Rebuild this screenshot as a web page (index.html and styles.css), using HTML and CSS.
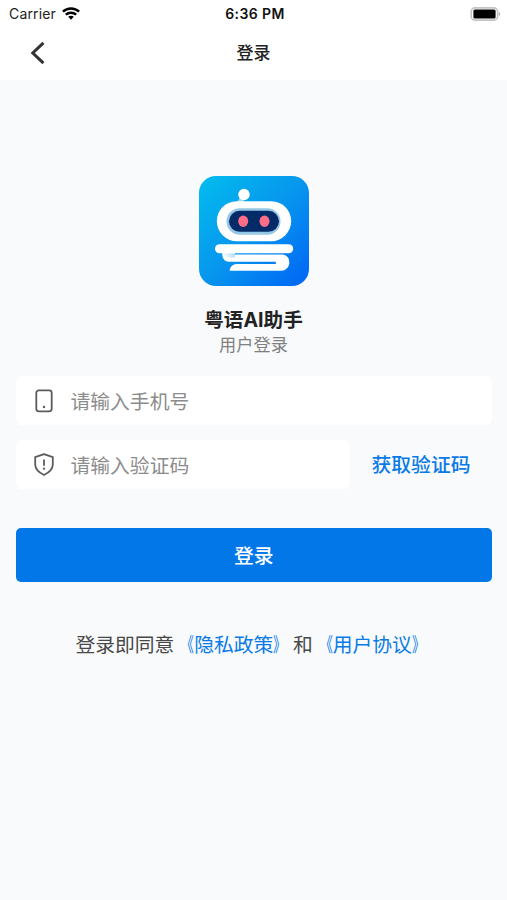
FILE: index.html
```html
<!DOCTYPE html>
<html lang="zh-CN">
<head>
  <meta charset="UTF-8" />
  <meta name="viewport" content="width=device-width, initial-scale=1.0"/>
  <title>登录</title>
  <link rel="stylesheet" href="styles.css">
</head>
<body>

<header>
  <!-- Status bar -->
  <div class="status">
    <div class="carrier">
      <span>Carrier</span>
      <svg width="18" height="14" viewBox="0 0 18 14" fill="none" stroke="#000" stroke-width="2.4">
        <path d="M0.9 4.7 C5.4 0.4 12.6 0.4 17.1 4.7"/>
        <path d="M3.8 7.7 C6.8 5 11.2 5 14.2 7.7"/>
        <path d="M6.2 9.8 C7.8 8.5 10.2 8.5 11.8 9.8 L9 12.7 Z" fill="#000" stroke="none"/>
      </svg>
    </div>
    <div class="time">6:36 PM</div>
    <div class="battery">
      <svg width="31" height="14" viewBox="0 0 31 14">
        <rect x="1.2" y="0.9" width="26.4" height="12.2" rx="3.6" fill="#fff" stroke="#c4c4c4" stroke-width="1.6"/>
        <rect x="3.4" y="2.6" width="22.2" height="8.8" rx="1.5" fill="#000"/>
        <path d="M28.8 4.9 C30.7 5.6 30.7 8.4 28.8 9.1 Z" fill="#aaa"/>
      </svg>
    </div>
  </div>

  <!-- Title bar -->
  <div class="navbar">
    <a class="back" href="#">
      <svg width="16" height="24" viewBox="0 0 16 24" fill="none" stroke="#333" stroke-width="3">
        <path d="M13.4 1.8 L2.8 12 L13.4 22.2"/>
      </svg>
    </a>
    <h1>登录</h1>
  </div>
</header>

<main>
  <div class="brand">
    <svg class="logo" width="110" height="110" viewBox="0 0 110 110">
      <defs>
        <linearGradient id="bg" x1="0" y1="0" x2="1" y2="1">
          <stop offset="0" stop-color="#02bdee"/>
          <stop offset="0.5" stop-color="#0796ee"/>
          <stop offset="1" stop-color="#0064f5"/>
        </linearGradient>
        <linearGradient id="fold" x1="0" y1="0" x2="1" y2="0">
          <stop offset="0" stop-color="#fff"/>
          <stop offset="1" stop-color="#b5dcfb"/>
        </linearGradient>
      </defs>
      <rect width="110" height="110" rx="17" fill="url(#bg)"/>
      <!-- antenna -->
      <path d="M36 26.500 C40 25 41 23 40.500 18 L47.500 23 C45.500 23.500 44 24.500 44 26.500 Z" fill="#9cdcf8"/>
      <circle cx="45" cy="18.5" r="5.7" fill="#fff"/>
      <!-- head -->
      <rect x="17.8" y="25.2" width="74.4" height="40" rx="20" fill="#fff"/>
      <rect x="27.5" y="32.2" width="54" height="26.5" rx="13.2" fill="#94c8e6"/>
      <rect x="30" y="34.8" width="50" height="21" rx="10.5" fill="#042b68"/>
      <ellipse cx="44.2" cy="45.3" rx="5" ry="5.7" fill="#fc6d86"/>
      <ellipse cx="65.5" cy="45.3" rx="5" ry="5.7" fill="#fc6d86"/>
      <!-- body -->
      <path d="M23.5 76 V80 C24 84 27 85.8 31 85.8 H76.8 V88 H38 C33.500 88 31 91 30.500 94.800 H82 C87 94.800 90.300 91 90.300 86.500 C90.300 81 87 78.600 82 78.600 H36 V76 Z" fill="#fff"/>
      <path d="M23.500 77 H36 V81.500 C31 81.500 27 81 23.500 79 Z" fill="url(#fold)"/>
      <rect x="16" y="68.2" width="78.2" height="9" rx="4.5" fill="#fff"/>
    </svg>
    <h2>粤语AI助手</h2>
    <p>用户登录</p>
  </div>

  <form>
    <label class="field">
      <svg width="24" height="24" viewBox="0 0 24 24" fill="none" stroke="#5c5c5c" stroke-width="1.8">
        <rect x="4.3" y="1.3" width="15.4" height="21" rx="2.5"/>
        <circle cx="12" cy="18" r="1.2" fill="#5c5c5c" stroke="none"/>
      </svg>
      <input type="tel" placeholder="请输入手机号" id="phone" />
    </label>

    <div class="row">
      <label class="field">
        <svg width="24" height="24" viewBox="0 0 24 24" fill="none" stroke="#5c5c5c" stroke-width="1.8">
          <path d="M12 1.2 L20.800 4.200 V11.500 C20.800 16.200 17.500 19.300 12 22 C6.500 19.300 3.200 16.200 3.200 11.500 V4.200 Z" stroke-linejoin="round"/>
          <path d="M12 6.500 V12.800"/>
          <circle cx="12" cy="15.700" r="1.150" fill="#5c5c5c" stroke="none"/>
        </svg>
        <input type="text" placeholder="请输入验证码" id="code" />
      </label>
      <button type="button" class="get-code">获取验证码</button>
    </div>

    <button type="submit" class="submit">登录</button>
  </form>

  <p class="agreement">登录即同意<a href="#"><span class="open">《</span>隐私政策<span class="close">》</span></a>和<a href="#"><span class="open">《</span>用户协议<span class="close">》</span></a></p>
</main>

</body>
</html>
```
FILE: styles.css
```css
* {
  box-sizing: border-box;
}

body {
  margin: 0;
  min-height: 100vh;
  background-color: #f8fafc;
  font-family: Inter, "Noto Sans CJK SC", sans-serif;
  color: #222;
}

h1, h2, p {
  margin: 0;
}

svg {
  display: block;
  flex: none;
}

a {
  color: #0a7be6;
  text-decoration: none;
}

header {
  height: 80px;
  background-color: #fff;
}

.status {
  display: grid;
  grid-template-columns: 1fr auto 1fr;
  align-items: center;
  height: 27px;
  padding: 0 6px 0 9px;
  font-size: 14px;
}

.carrier {
  display: flex;
  align-items: center;
  gap: 6px;
  letter-spacing: 0.15px;
}

.time {
  font-weight: 600;
  letter-spacing: 0.4px;
  color: #111;
}

.battery {
  justify-self: end;
}

.navbar {
  display: grid;
  grid-template-columns: 1fr auto 1fr;
  align-items: center;
  height: 52px;
  padding: 0 30px;
}

.navbar h1 {
  font-size: 17px;
  font-weight: 500;
  line-height: 24px;
}

.brand {
  display: flex;
  flex-direction: column;
  align-items: center;
  padding-top: 96px;
}

.brand h2 {
  margin-top: 20px;
  font-size: 19.6px;
  font-weight: 700;
  line-height: 28px;
}

.brand p {
  font-size: 17.2px;
  line-height: 22px;
  color: #808080;
}

form {
  padding: 20px 15px 0 15.5px;
}

.field {
  display: flex;
  align-items: center;
  gap: 15px;
  flex: 1;
  min-width: 0;
  height: 49px;
  padding: 0 16px;
  background-color: #fff;
  border-radius: 6px;
}

.row {
  display: flex;
  margin-top: 15px;
}

input {
  flex: 1;
  min-width: 0;
  height: 100%;
  padding: 2px 0 0;
  border: none;
  outline: none;
  background-color: transparent;
  font-family: inherit;
  font-size: 19.8px;
}

input::placeholder {
  color: #8c8c8c;
}

button {
  border: none;
  padding: 0 0 2px;
  font-family: inherit;
  font-size: 19.8px;
  font-weight: 500;
  cursor: pointer;
}

.get-code {
  flex: none;
  width: 142px;
  background-color: transparent;
  color: #0a7be6;
}

.submit {
  width: 100%;
  height: 54px;
  margin-top: 39px;
  background-color: #0278e8;
  color: #fff;
  border-radius: 5px;
}

.agreement {
  margin-top: 48px;
  text-align: center;
  font-size: 19.8px;
  line-height: 30px;
  color: #484848;
}

/* narrower title marks, kept tight against the link text */
.open, .close {
  display: inline-block;
}

.open {
  transform: scaleX(0.65);
  transform-origin: right;
}

.close {
  transform: scaleX(0.65);
  transform-origin: left;
}
```
